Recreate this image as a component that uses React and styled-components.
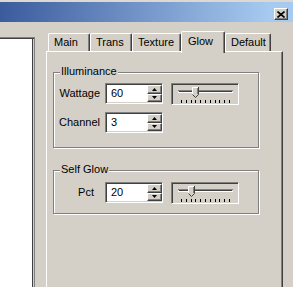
import React from "react";
import styled, { createGlobalStyle } from "styled-components";

const Global = createGlobalStyle`
  html, body { margin: 0; padding: 0; background: #d4d0c8; }
  body {
    font-family: "Liberation Sans", Arial, sans-serif;
    font-size: 11px;
    color: #000;
  }
`;

const Window = styled.div`
  width: 293px;
  height: 287px;
  overflow: hidden;
  background: #d4d0c8;
  display: flex;
  flex-direction: column;
  box-sizing: border-box;
  border-top: 2px solid #dcd9d2;
`;

const TitleBar = styled.div`
  flex: none;
  height: 20px;
  box-sizing: border-box;
  background: linear-gradient(90deg, #3b5b9d 0%, #a6caf0 92%);
  display: flex;
  justify-content: flex-end;
  align-items: flex-end;
  padding: 0 5px 2px 0;
`;

const CloseButton = styled.div`
  width: 14px;
  height: 12px;
  box-sizing: border-box;
  background: #d4d0c8;
  border: 1px solid;
  border-color: #fff #404040 #404040 #fff;
  box-shadow: inset -1px -1px 0 #808080;
  display: flex;
  align-items: center;
  justify-content: center;
`;

const Body = styled.div`
  flex: 1;
  min-height: 0;
  display: flex;
  gap: 11px;
`;

const ListPane = styled.div`
  width: 35px;
  margin-top: 15px;
  box-sizing: border-box;
  background: #fff;
  border-top: 1px solid #808080;
  border-right: 1px solid #808080;
  box-shadow: inset 0 1px 0 #404040, inset -1px 0 0 #d4d0c8, inset -2px 0 0 #404040;
`;

const TabControl = styled.div`
  width: 237px;
  margin-top: 9px;
  display: flex;
  flex-direction: column;
`;

const TabRow = styled.div`
  height: 20px;
  flex: none;
  display: flex;
  align-items: flex-end;
  padding-left: 2px;
  position: relative;
  z-index: 1;
`;

const Tab = styled.div`
  width: ${(p) => p.$w}px;
  height: ${(p) => (p.$active ? 22 : 18)}px;
  margin-bottom: ${(p) => (p.$active ? -2 : 0)}px;
  box-sizing: border-box;
  background: #d4d0c8;
  border-top: 1px solid #fff;
  border-left: 1px solid #fff;
  border-right: 1px solid #404040;
  border-radius: 2px 2px 0 0;
  box-shadow: inset -1px 0 0 #808080;
  padding: ${(p) => (p.$active ? 3 : 2)}px 0 0 ${(p) => (p.$active ? 6 : 5)}px;
  line-height: 13px;
  white-space: nowrap;
`;

const Panel = styled.div`
  flex: 1;
  box-sizing: border-box;
  border-top: 1px solid #fff;
  border-left: 1px solid #fff;
  border-right: 1px solid #404040;
  box-shadow: inset -1px 0 0 #808080;
  padding-left: 6px;
  display: flex;
  flex-direction: column;
`;

const Group = styled.div`
  position: relative;
  width: 206px;
  box-sizing: border-box;
  margin-top: ${(p) => p.$mt}px;
  padding: ${(p) => p.$pt}px 0 ${(p) => p.$pb}px 0;
  border: 1px solid #808080;
  box-shadow: 1px 1px 0 #fff, inset 1px 1px 0 #fff;
  display: grid;
  grid-template-columns: 51px 66px 68px;
  grid-auto-rows: 21px;
  row-gap: 8px;
  align-items: center;
`;

const Caption = styled.span`
  position: absolute;
  top: -8px;
  left: 6px;
  padding: 0 1px;
  line-height: 13px;
  background: #d4d0c8;
`;

const Label = styled.span`
  text-align: right;
  padding-right: ${(p) => p.$pr || 5}px;
  line-height: 13px;
`;

const Spin = styled.div`
  width: 58px;
  height: 21px;
  box-sizing: border-box;
  display: flex;
  background: #fff;
  border: 1px solid;
  border-color: #808080 #fff #fff #808080;
  box-shadow: inset 1px 1px 0 #404040, inset -1px -1px 0 #d4d0c8;
`;

const SpinValue = styled.span`
  flex: 1;
  padding-left: 5px;
  line-height: 18px;
`;

const SpinButtons = styled.div`
  width: 15px;
  display: flex;
  flex-direction: column;
  margin: 1px 0;
`;

const SpinButton = styled.div`
  height: 9px;
  box-sizing: border-box;
  background: #d4d0c8;
  border: 1px solid;
  border-color: #fff #404040 #404040 #fff;
  box-shadow: inset -1px -1px 0 #808080;
  display: flex;
  align-items: center;
  justify-content: center;
`;

const Track = styled.div`
  width: 68px;
  height: 22px;
  align-self: start;
  box-sizing: border-box;
  border: 1px solid;
  border-color: #808080 #fff #fff #808080;
  box-shadow: inset 1px 1px 0 #404040;
  display: flex;
`;

const TICKS = [9, 14, 19, 23, 28, 33, 38, 43, 47, 52, 57];

function Trackbar({ value }) {
  const t = TICKS[value];
  const l = t - 3;
  const r = t + 4;
  return (
    <Track>
      <svg width="66" height="20" viewBox="0 0 66 20" shapeRendering="crispEdges">
        <rect x="6" y="6" width="55" height="1" fill="#808080" />
        <rect x="7" y="7" width="53" height="1" fill="#404040" />
        <rect x="6" y="8" width="55" height="1" fill="#fff" />
        {TICKS.map((x) => (
          <rect key={x} x={x} y="16" width="1" height="3" fill="#000" />
        ))}
        <polygon
          points={`${l},3 ${r},3 ${r},10 ${t + 0.5},13.5 ${l},10`}
          fill="#d4d0c8"
          shapeRendering="auto"
        />
        <polyline
          points={`${l + 0.5},10.5 ${l + 0.5},3.5 ${r - 1},3.5`}
          fill="none"
          stroke="#fff"
          strokeWidth="1"
          shapeRendering="auto"
        />
        <polyline
          points={`${r - 0.5},3 ${r - 0.5},10.5 ${t + 0.5},13.5 ${l + 0.5},10.5`}
          fill="none"
          stroke="#404040"
          strokeWidth="1"
          shapeRendering="auto"
        />
        <polyline
          points={`${r - 1.5},4 ${r - 1.5},10`}
          fill="none"
          stroke="#808080"
          strokeWidth="1"
          shapeRendering="auto"
        />
      </svg>
    </Track>
  );
}

function Arrow({ down }) {
  return (
    <svg width="5" height="3" viewBox="0 0 5 3">
      <polygon points={down ? "0,0 5,0 2.5,3" : "2.5,0 5,3 0,3"} fill="#000" />
    </svg>
  );
}

function SpinBox({ value }) {
  return (
    <Spin>
      <SpinValue>{value}</SpinValue>
      <SpinButtons>
        <SpinButton>
          <Arrow />
        </SpinButton>
        <SpinButton>
          <Arrow down />
        </SpinButton>
      </SpinButtons>
    </Spin>
  );
}

const tabs = [
  { label: "Main", w: 42 },
  { label: "Trans", w: 42 },
  { label: "Texture", w: 49 },
  { label: "Glow", w: 44, active: true },
  { label: "Default", w: 46 },
];

export default function App() {
  return (
    <>
      <Global />
      <Window>
        <TitleBar>
          <CloseButton>
            <svg width="8" height="7" viewBox="0 0 8 7">
              <path d="M0.5 0.5 L7.5 6.5 M7.5 0.5 L0.5 6.5" stroke="#000" strokeWidth="1.6" />
            </svg>
          </CloseButton>
        </TitleBar>
        <Body>
          <ListPane />
          <TabControl>
            <TabRow>
              {tabs.map((t) => (
                <Tab key={t.label} $w={t.w} $active={t.active}>
                  {t.label}
                </Tab>
              ))}
            </TabRow>
            <Panel>
              <Group $mt={20} $pt={10} $pb={14}>
                <Caption>Illuminance</Caption>
                <Label>Wattage</Label>
                <SpinBox value="60" />
                <Trackbar value={3} />
                <Label>Channel</Label>
                <SpinBox value="3" />
                <span />
              </Group>
              <Group $mt={22} $pt={11} $pb={10}>
                <Caption>Self Glow</Caption>
                <Label $pr={11}>Pct</Label>
                <SpinBox value="20" />
                <Trackbar value={2} />
              </Group>
            </Panel>
          </TabControl>
        </Body>
      </Window>
    </>
  );
}
